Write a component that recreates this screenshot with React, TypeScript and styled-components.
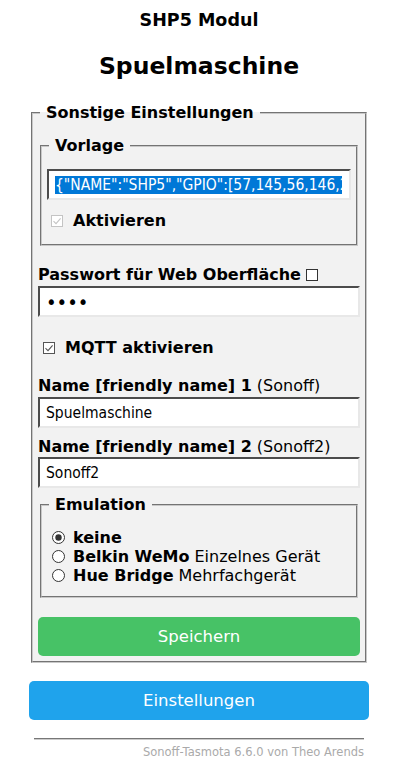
import React from "react";
import styled, { createGlobalStyle } from "styled-components";

const GlobalStyle = createGlobalStyle`
  html, body {
    margin: 0;
    padding: 0;
    background: #fff;
  }
  body {
    font-family: "DejaVu Sans", Verdana, sans-serif;
    font-size: 16px;
    color: #000;
  }
`;

const Page = styled.div`
  width: 340px;
  padding-left: 29px;
`;

const Header = styled.div`
  text-align: center;
`;

const H3 = styled.h3`
  font-size: 17.5px;
  line-height: 22px;
  margin: 9px 0 0;
  font-weight: bold;
`;

const H2 = styled.h2`
  font-size: 23.5px;
  line-height: 28px;
  margin: 21px 0 0;
  font-weight: bold;
`;

const Fieldset = styled.fieldset<{ $top?: number }>`
  margin: ${(p) => p.$top ?? 0}px 2px 0;
  padding: 5px;
  border: 2px groove #c8c8c8;
  background: #f2f2f2;
  min-width: 0;
`;

const Legend = styled.legend`
  padding: 0 6px;
  margin-left: 2px;
  font-weight: bold;
  font-size: 16px;
  line-height: 20px;
`;

const TextBox = styled.input<{ $top?: number; $dots?: boolean }>`
  display: block;
  width: 100%;
  box-sizing: border-box;
  height: 31px;
  margin: ${(p) => p.$top ?? 0}px 0 0;
  padding: 0 6px;
  border: 2px inset #e8e8e8;
  border-top-color: #a0a0a0;
  border-left-color: #a0a0a0;
  background: #fff;
  font-family: "DejaVu Sans Condensed", "Liberation Sans", sans-serif;
  font-size: ${(p) => (p.$dots ? "20px" : "15.5px")};
  color: #000;
  outline: none;
`;

const Template = styled.div`
  box-sizing: border-box;
  height: 31px;
  margin-top: 8px;
  padding: 0 7px 0 6px;
  border: 2px inset #e8e8e8;
  border-top-color: #a0a0a0;
  border-left-color: #a0a0a0;
  background: #fff;
  display: flex;
  align-items: center;
  font-family: "DejaVu Sans Condensed", "Liberation Sans", sans-serif;
  font-size: 15.5px;
`;

const Clip = styled.div`
  flex: 1;
  overflow: hidden;
  white-space: nowrap;
`;

const Selected = styled.span`
  background: #0078d7;
  color: #fff;
  line-height: 20px;
`;

const Row = styled.div<{ $top?: number; $indent?: number }>`
  display: flex;
  align-items: center;
  margin-top: ${(p) => p.$top ?? 0}px;
  padding-left: ${(p) => p.$indent ?? 0}px;
  line-height: 20px;
`;

const Label = styled.div<{ $top?: number }>`
  margin-top: ${(p) => p.$top ?? 0}px;
  line-height: 20px;
  display: flex;
  align-items: center;
`;

const Bold = styled.b`
  font-weight: bold;
`;

const Hint = styled.span`
  font-weight: normal;
  margin-left: 5px;
`;

const Box = styled.span<{ $gap?: number }>`
  display: inline-flex;
  margin-right: ${(p) => p.$gap ?? 10}px;
  margin-left: 1px;
  flex-shrink: 0;
`;

const Radios = styled.div`
  margin-top: 8px;
  margin-bottom: 6px;
  padding-left: 4px;
`;

const RadioRow = styled.div`
  display: flex;
  align-items: center;
  line-height: 19px;
`;

const Button = styled.button<{ $bg: string; $top: number }>`
  display: block;
  width: 100%;
  margin-top: ${(p) => p.$top}px;
  border: 0;
  border-radius: 5px;
  background: ${(p) => p.$bg};
  color: #fff;
  font-family: "DejaVu Sans", Verdana, sans-serif;
  font-size: 16.5px;
  line-height: 39px;
  padding: 0;
  cursor: pointer;
`;

const Footer = styled.div`
  padding: 0 5px;
  text-align: right;
  font-size: 11.5px;
  margin-top: 18px;
`;

const Rule = styled.hr`
  margin: 0 0 5px;
  border: 0;
  border-top: 1px solid #777;
  border-bottom: 1px solid #ccc;
  height: 0;
`;

const FooterLink = styled.a`
  color: #aaa;
  text-decoration: none;
`;

const CheckBox = ({
  checked,
  color,
  gap,
}: {
  checked: boolean;
  color: string;
  gap?: number;
}) => (
  <Box $gap={gap}>
    <svg width="12" height="12" viewBox="0 0 12 12">
      <rect x="0.5" y="0.5" width="11" height="11" fill="#fff" stroke={color} />
      {checked && (
        <path d="M2.5 6.2 L5 8.6 L9.6 3.4" fill="none" stroke={color} strokeWidth="1.1" />
      )}
    </svg>
  </Box>
);

const Radio = ({ checked }: { checked: boolean }) => (
  <Box $gap={8}>
    <svg width="13" height="13" viewBox="0 0 13 13">
      <circle cx="6.5" cy="6.5" r="6" fill="#fff" stroke="#333" />
      {checked && <circle cx="6.5" cy="6.5" r="3.2" fill="#333" />}
    </svg>
  </Box>
);

const App = () => {
  return (
    <Page>
      <GlobalStyle />
      <Header>
        <H3>SHP5 Modul</H3>
        <H2>Spuelmaschine</H2>
      </Header>

      <Fieldset $top={23}>
        <Legend>Sonstige Einstellungen</Legend>

        <Fieldset $top={8}>
          <Legend>Vorlage</Legend>
          <Template>
            <Clip>
              <Selected>
                {'{"NAME":"SHP5","GPIO":[57,145,56,146,255,22,0,0,21,0,0,0,0],"FLAG":0,"BASE":45}'}
              </Selected>
            </Clip>
          </Template>
          <Row $top={11} $indent={3}>
            <CheckBox checked color="#c4c4c4" />
            <Bold>Aktivieren</Bold>
          </Row>
          <div style={{ height: 8 }} />
        </Fieldset>

        <Label $top={19}>
          <Bold>Passwort für Web Oberfläche</Bold>
          <span style={{ marginLeft: 4, display: "inline-flex" }}>
            <CheckBox checked={false} color="#333" gap={0} />
          </span>
        </Label>
        <TextBox type="password" defaultValue="****" $top={1} $dots />

        <Row $top={21} $indent={4}>
          <CheckBox checked color="#555" />
          <Bold>MQTT aktivieren</Bold>
        </Row>

        <Label $top={18}>
          <Bold>Name [friendly name] 1</Bold>
          <Hint>(Sonoff)</Hint>
        </Label>
        <TextBox defaultValue="Spuelmaschine" $top={1} />

        <Label $top={9}>
          <Bold>Name [friendly name] 2</Bold>
          <Hint>(Sonoff2)</Hint>
        </Label>
        <TextBox defaultValue="Sonoff2" $top={0} />

        <Fieldset $top={7}>
          <Legend>Emulation</Legend>
          <Radios>
            <RadioRow>
              <Radio checked />
              <Bold>keine</Bold>
            </RadioRow>
            <RadioRow>
              <Radio checked={false} />
              <Bold>Belkin WeMo</Bold>
              <Hint>Einzelnes Gerät</Hint>
            </RadioRow>
            <RadioRow>
              <Radio checked={false} />
              <Bold>Hue Bridge</Bold>
              <Hint>Mehrfachgerät</Hint>
            </RadioRow>
          </Radios>
        </Fieldset>

        <Button $bg="#47c266" $top={19}>
          Speichern
        </Button>
      </Fieldset>

      <Button $bg="#1fa3ec" $top={18}>
        Einstellungen
      </Button>

      <Footer>
        <Rule />
        <FooterLink href="#">Sonoff-Tasmota 6.6.0 von Theo Arends</FooterLink>
      </Footer>
    </Page>
  );
};

export default App;
